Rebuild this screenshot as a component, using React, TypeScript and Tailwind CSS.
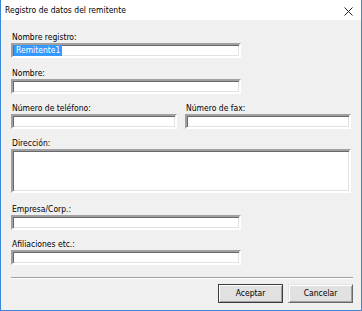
import React from "react";

function Label({ children, className = "" }: { children: React.ReactNode; className?: string }) {
  return <div className={"h-[12px] leading-[12px] pl-[1px] whitespace-nowrap " + className}>{children}</div>;
}

function Box({ className = "", children }: { className?: string; children?: React.ReactNode }) {
  return (
    <div
      className={
        "bg-white border-2 border-t-[#a0a0a0] border-l-[#a0a0a0] border-b-white border-r-white shadow-[inset_1px_1px_0_#696969,inset_-1px_-1px_0_#e3e3e3] " +
        className
      }
    >
      {children}
    </div>
  );
}

export default function App() {
  return (
    <div className="w-[362px] h-[311px] flex flex-col bg-white border-x border-b border-[#3c87d6] text-[8.5px] text-black [font-family:'DejaVu_Sans_Condensed','DejaVu_Sans',sans-serif] font-stretch-condensed">
      <div className="h-[20px] flex items-center justify-between pl-[4px] pr-[8px] bg-white shrink-0">
        <span className="leading-[12px] whitespace-nowrap">Registro de datos del remitente</span>
        <svg width="9" height="9" viewBox="0 0 9 9" className="mt-[2px]">
          <path d="M0.5 0.5 L8.5 8.5 M8.5 0.5 L0.5 8.5" stroke="#222" strokeWidth="1" fill="none" />
        </svg>
      </div>
      <div className="flex-1 bg-[#f0f0f0] px-[10px] flex flex-col">
        <Label className="mt-[11px]">Nombre registro:</Label>
        <Box className="w-[230px] h-[15px] flex items-center pl-[1px]">
          <span className="bg-[#3399ff] text-white leading-[11px] px-[2px]">Remitente1</span>
        </Box>

        <Label className="mt-[9px]">Nombre:</Label>
        <Box className="w-[230px] h-[15px]" />

        <div className="mt-[8px] flex gap-[8px]">
          <div className="flex-1 flex flex-col">
            <Label>Número de teléfono:</Label>
            <Box className="h-[15px]" />
          </div>
          <div className="flex-1 flex flex-col">
            <Label>Número de fax:</Label>
            <Box className="h-[15px]" />
          </div>
        </div>

        <Label className="mt-[8px]">Dirección:</Label>
        <Box className="h-[44px]" />

        <Label className="mt-[10px]">Empresa/Corp.:</Label>
        <Box className="w-[230px] h-[15px]" />

        <Label className="mt-[8px]">Afiliaciones etc.:</Label>
        <Box className="w-[230px] h-[15px]" />

        <div className="mt-[12px] border-t border-[#a0a0a0] border-b border-b-white mr-[-2px]" />

        <div className="mt-[5px] flex justify-end gap-[5px] mr-[-2px]">
          <div className="w-[65px] h-[19px] border border-[#3c3c3c] bg-[#e1e1e1]">
            <div className="w-full h-full flex items-center justify-center shadow-[inset_1px_1px_0_#ffffff,inset_-1px_-1px_0_#a0a0a0]">
              Aceptar
            </div>
          </div>
          <div className="w-[65px] h-[19px] border border-t-[#e3e3e3] border-l-[#e3e3e3] border-r-[#696969] border-b-[#696969] bg-[#e1e1e1]">
            <div className="w-full h-full flex items-center justify-center shadow-[inset_1px_1px_0_#ffffff,inset_-1px_-1px_0_#a0a0a0]">
              Cancelar
            </div>
          </div>
        </div>
      </div>
    </div>
  );
}
